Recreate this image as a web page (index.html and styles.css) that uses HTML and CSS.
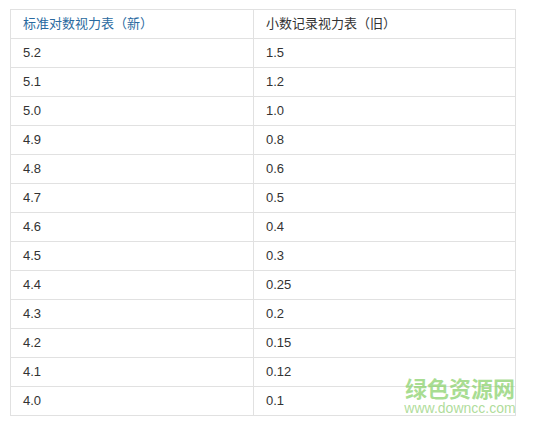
FILE: index.html
```html
<!DOCTYPE html>
<html lang="zh">
<head>
<meta charset="utf-8">
<title>视力表</title>
<link rel="stylesheet" href="styles.css">
</head>
<body>
<div class="wrap">
  <table class="vt">
    <thead>
      <tr><th class="link">标准对数视力表（新）</th><th>小数记录视力表（旧）</th></tr>
    </thead>
    <tbody>
      <tr><td>5.2</td><td>1.5</td></tr>
      <tr><td>5.1</td><td>1.2</td></tr>
      <tr><td>5.0</td><td>1.0</td></tr>
      <tr><td>4.9</td><td>0.8</td></tr>
      <tr><td>4.8</td><td>0.6</td></tr>
      <tr><td>4.7</td><td>0.5</td></tr>
      <tr><td>4.6</td><td>0.4</td></tr>
      <tr><td>4.5</td><td>0.3</td></tr>
      <tr><td>4.4</td><td>0.25</td></tr>
      <tr><td>4.3</td><td>0.2</td></tr>
      <tr><td>4.2</td><td>0.15</td></tr>
      <tr><td>4.1</td><td>0.12</td></tr>
      <tr><td>4.0</td><td>0.1</td></tr>
    </tbody>
  </table>
  <div class="wm">
    <div class="wm-cn">绿色资源网</div>
    <div class="wm-en">www.downcc.com</div>
  </div>
</div>
</body>
</html>
```
FILE: styles.css
```css
html, body {
  margin: 0;
  padding: 0;
  background: #fff;
}
body {
  font-family: "Liberation Sans", "Noto Sans CJK SC", sans-serif;
  font-size: 13px;
  color: #333;
}
.wrap {
  position: relative;
  padding: 9px 0 0 10px;
  width: 506px;
}
.vt {
  border-collapse: collapse;
  width: 506px;
  table-layout: fixed;
}
.vt th, .vt td {
  border: 1px solid #e1e1e1;
  height: 28px;
  padding: 0 12px;
  text-align: left;
  vertical-align: middle;
  font-weight: normal;
  line-height: 16px;
}
.vt th:first-child, .vt td:first-child {
  width: 218px;
}
.vt th {
  font-size: 13px;
}
.vt .link {
  color: #2a6aa0;
}
.wm {
  position: absolute;
  left: 403px;
  top: 376px;
  width: 114px;
  text-align: center;
  display: flex;
  flex-direction: column;
  gap: 4px;
}
.wm-cn {
  font-family: "Noto Sans CJK SC", sans-serif;
  font-weight: bold;
  font-size: 22px;
  line-height: 22px;
  height: 22px;
  color: rgba(140, 210, 110, 0.75);
}
.wm-en {
  font-family: "Liberation Sans", sans-serif;
  font-size: 14px;
  line-height: 13px;
  height: 13px;
  color: rgba(140, 205, 110, 0.7);
}
```
